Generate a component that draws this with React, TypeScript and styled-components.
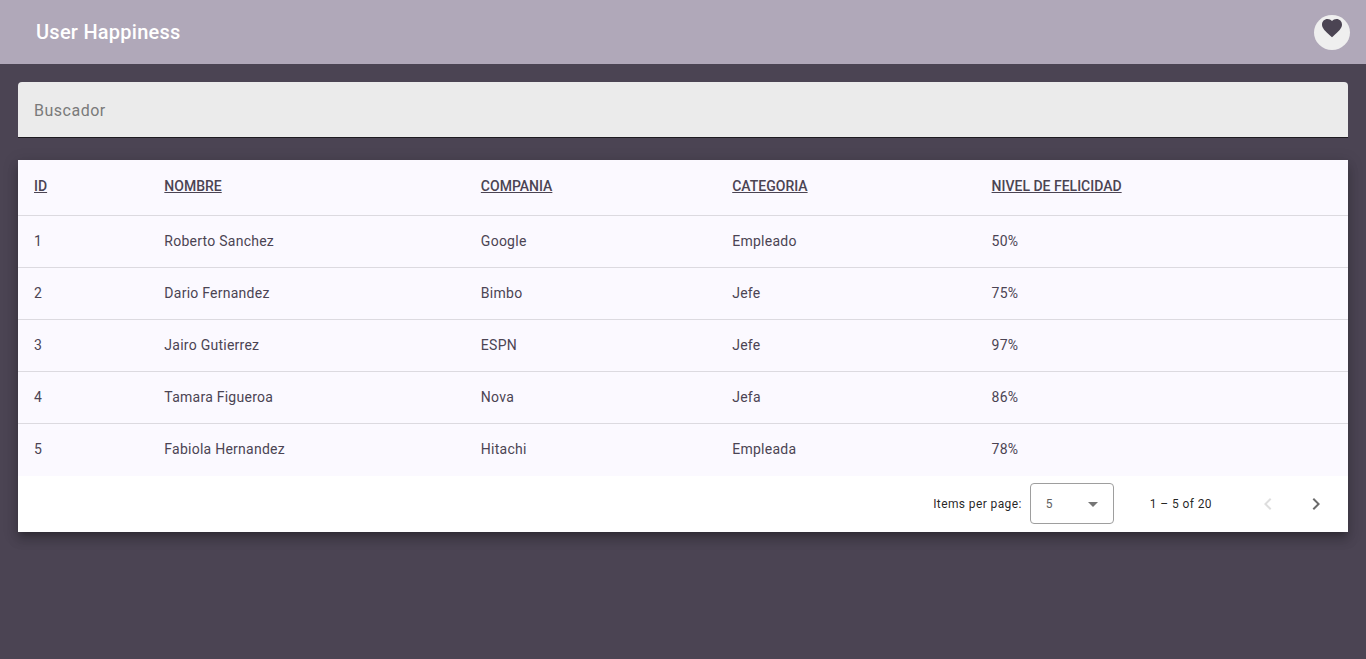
import React, { useState } from "react";
import styled, { createGlobalStyle } from "styled-components";

const GlobalStyle = createGlobalStyle`
  * { box-sizing: border-box; }
  body {
    margin: 0;
    background: #4b4453;
    font-family: Roboto, "Liberation Sans", sans-serif;
    color: #4b4453;
  }
`;

const Toolbar = styled.header`
  display: flex;
  align-items: center;
  justify-content: space-between;
  height: 64px;
  padding: 0 16px 0 36px;
  background: #b0a8b9;
`;

const Title = styled.h1`
  margin: 0;
  font-size: 20px;
  line-height: 32px;
  font-weight: 500;
  letter-spacing: 0.0125em;
  color: #fff;
`;

const FavoriteButton = styled.button`
  display: flex;
  justify-content: center;
  align-items: flex-start;
  width: 36px;
  height: 35px;
  margin: 1px 0 0;
  padding: 1px 0 0;
  border: 0;
  border-radius: 50%;
  background: #efefef;
  color: #4b4453;
  cursor: pointer;
`;

const Content = styled.main`
  display: flex;
  flex-direction: column;
  gap: 22px;
  padding: 18px;
`;

const SearchInput = styled.input`
  width: 100%;
  height: 56px;
  padding: 2px 16px 0;
  border: 0;
  border-bottom: 1px solid #1d1b20;
  border-radius: 4px 4px 0 0;
  outline: 0;
  background: #ebebeb;
  font: 400 16px/24px Roboto, "Liberation Sans", sans-serif;
  letter-spacing: 0.03125em;
  color: #4b4453;
  &::placeholder {
    color: #7a7a7a;
    opacity: 1;
  }
`;

const Panel = styled.section`
  background: #fff;
  box-shadow:
    0 5px 5px -3px rgba(0, 0, 0, 0.2),
    0 8px 10px 1px rgba(0, 0, 0, 0.14),
    0 3px 14px 2px rgba(0, 0, 0, 0.12);
`;

const Table = styled.table`
  width: 100%;
  table-layout: fixed;
  border-collapse: separate;
  border-spacing: 0;
  background: #fbf9ff;
`;

const Column = styled.col<{ $share: string }>`
  width: ${(p) => p.$share};
`;

const HeadCell = styled.th`
  height: 56px;
  padding: 0 16px 3px;
  border-bottom: 1px solid #dcdae0;
  text-align: left;
  font-size: 14px;
  line-height: 22px;
  font-weight: 500;
  text-decoration: underline;
`;

const Cell = styled.td`
  height: 52px;
  padding: 0 16px 2px;
  border-bottom: 1px solid #dcdae0;
  font-size: 14px;
  line-height: 20px;
  letter-spacing: 0.0179em;
  tr:last-child > & {
    border-bottom: 0;
  }
`;

const Paginator = styled.footer`
  display: flex;
  align-items: center;
  justify-content: flex-end;
  min-height: 56px;
  padding: 0 8px;
  font-size: 12px;
  line-height: 20px;
  letter-spacing: 0.0333em;
  color: rgba(0, 0, 0, 0.87);
`;

const PageSize = styled.div`
  display: flex;
  align-items: center;
  gap: 8px;
`;

const SelectBox = styled.div`
  display: grid;
  align-items: center;
  width: 84px;
  padding-bottom: 1px;
  > * {
    grid-area: 1 / 1;
  }
  > svg {
    justify-self: end;
    margin-right: 9px;
    color: #757575;
    pointer-events: none;
  }
`;

const Select = styled.select`
  appearance: none;
  width: 100%;
  height: 41px;
  padding: 1px 15px 0;
  border: 1px solid #9e9e9e;
  border-radius: 4px;
  background: #fff;
  font: 400 12px/20px Roboto, "Liberation Sans", sans-serif;
  letter-spacing: 0.0333em;
  color: #616161;
`;

const Range = styled.div`
  margin: 0 32px 0 36px;
`;

const PageButton = styled.button`
  display: flex;
  align-items: center;
  justify-content: center;
  width: 48px;
  height: 48px;
  padding: 0;
  border: 0;
  background: transparent;
  color: #6b6b6b;
  cursor: pointer;
  &:disabled {
    color: #dedede;
    cursor: default;
  }
`;

function Icon({ path, size = 24 }: { path: string; size?: number }) {
  return (
    <svg width={size} height={size} viewBox="0 0 24 24" fill="currentColor" aria-hidden="true">
      <path d={path} />
    </svg>
  );
}

const HEART =
  "M12 21.35l-1.45-1.32C5.4 15.36 2 12.28 2 8.5 2 5.42 4.42 3 7.5 3c1.74 0 3.41.81 4.5 2.09C13.09 3.81 14.76 3 16.5 3 19.58 3 22 5.42 22 8.5c0 3.78-3.4 6.86-8.55 11.54L12 21.35z";
const CARET = "M7 10l5 5 5-5z";
const PREVIOUS = "M15.41 7.41L14 6l-6 6 6 6 1.41-1.41L10.83 12z";
const NEXT = "M10 6L8.59 7.41 13.17 12l-4.58 4.59L10 18l6-6z";

const columns = [
  { label: "ID", share: "9.8%" },
  { label: "NOMBRE", share: "23.8%" },
  { label: "COMPANIA", share: "18.9%" },
  { label: "CATEGORIA", share: "19.5%" },
  { label: "NIVEL DE FELICIDAD", share: "28%" },
];

const users = [
  ["1", "Roberto Sanchez", "Google", "Empleado", "50%"],
  ["2", "Dario Fernandez", "Bimbo", "Jefe", "75%"],
  ["3", "Jairo Gutierrez", "ESPN", "Jefe", "97%"],
  ["4", "Tamara Figueroa", "Nova", "Jefa", "86%"],
  ["5", "Fabiola Hernandez", "Hitachi", "Empleada", "78%"],
];

export default function App() {
  const [query, setQuery] = useState("");
  const term = query.trim().toLowerCase();
  const visible = users.filter((user) => user.some((value) => value.toLowerCase().includes(term)));

  return (
    <>
      <GlobalStyle />
      <Toolbar>
        <Title>User Happiness</Title>
        <FavoriteButton type="button" aria-label="Favorite">
          <Icon path={HEART} />
        </FavoriteButton>
      </Toolbar>
      <Content>
        <SearchInput
          type="text"
          aria-label="Buscador"
          placeholder="Buscador"
          value={query}
          onChange={(event) => setQuery(event.target.value)}
        />
        <Panel>
          <Table>
            <colgroup>
              {columns.map((column) => (
                <Column key={column.label} $share={column.share} />
              ))}
            </colgroup>
            <thead>
              <tr>
                {columns.map((column) => (
                  <HeadCell key={column.label} scope="col">
                    {column.label}
                  </HeadCell>
                ))}
              </tr>
            </thead>
            <tbody>
              {visible.map((user) => (
                <tr key={user[0]}>
                  {user.map((value, index) => (
                    <Cell key={columns[index].label}>{value}</Cell>
                  ))}
                </tr>
              ))}
            </tbody>
          </Table>
          <Paginator>
            <PageSize>
              <label htmlFor="page-size">Items per page:</label>
              <SelectBox>
                <Select id="page-size" defaultValue="5">
                  <option>5</option>
                  <option>10</option>
                  <option>20</option>
                </Select>
                <Icon path={CARET} />
              </SelectBox>
            </PageSize>
            <Range>1 – 5 of 20</Range>
            <PageButton type="button" aria-label="Previous page" disabled>
              <Icon path={PREVIOUS} />
            </PageButton>
            <PageButton type="button" aria-label="Next page">
              <Icon path={NEXT} />
            </PageButton>
          </Paginator>
        </Panel>
      </Content>
    </>
  );
}
